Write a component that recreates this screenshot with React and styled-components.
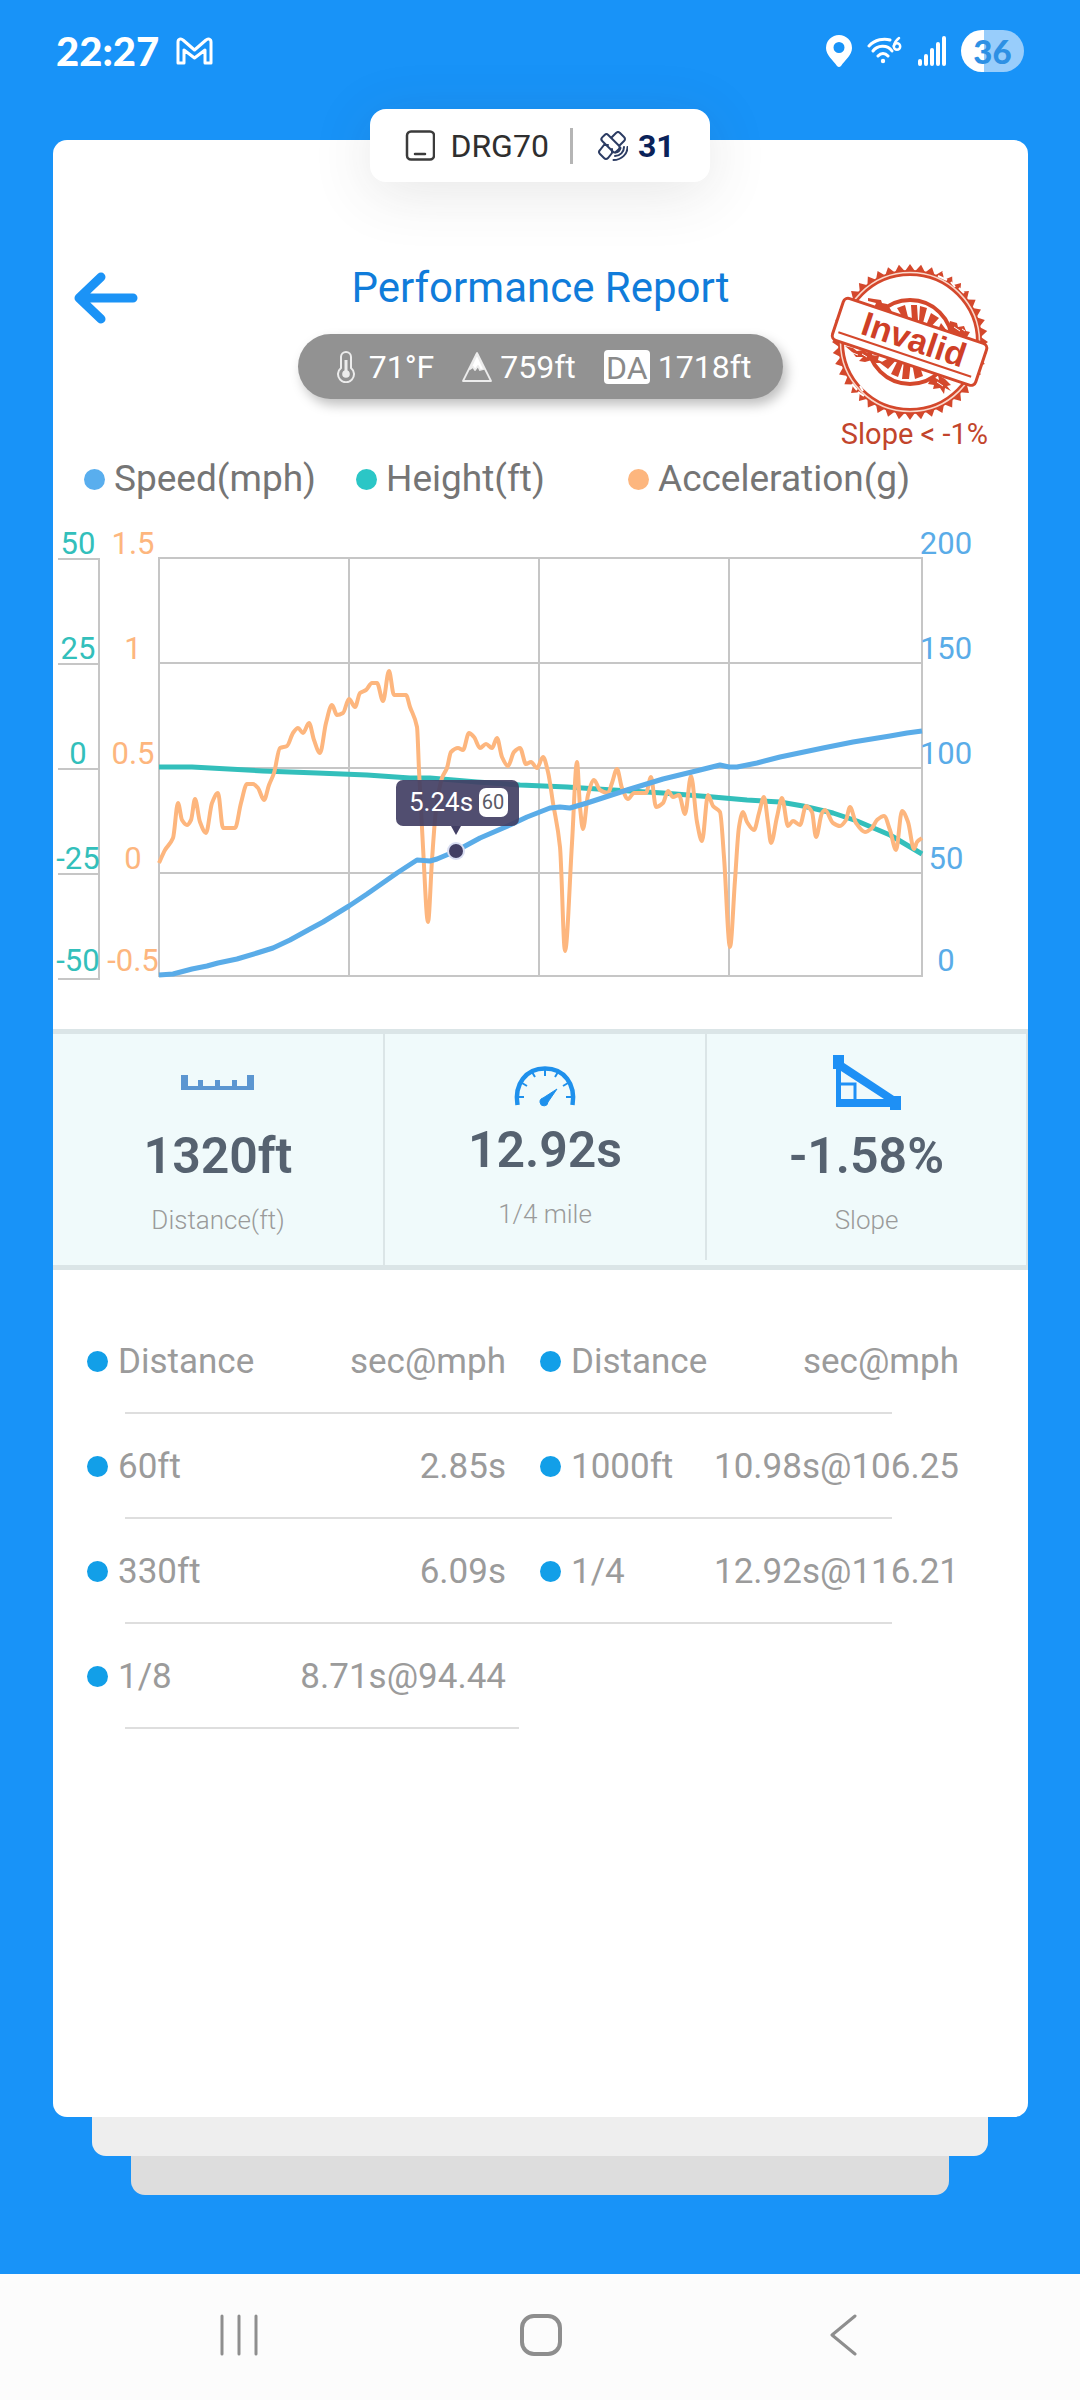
import React from "react";
import styled, { createGlobalStyle } from "styled-components";

const GlobalStyle = createGlobalStyle`
  * {
    box-sizing: border-box;
  }

  body {
    margin: 0;
    background-color: #1893f8;
    font-family: Roboto, "Liberation Sans", sans-serif;
  }

  svg {
    display: block;
  }

  button {
    padding: 0;
    border: none;
    background: none;
    cursor: pointer;
  }
`;

const Page = styled.div`
  display: flex;
  flex-direction: column;
  min-height: 100vh;
`;

const StatusBar = styled.header`
  display: flex;
  align-items: center;
  justify-content: space-between;
  height: 109px;
  padding: 0 56px 8px;
  color: #fff;
`;

const StatusGroup = styled.div`
  display: flex;
  align-items: center;
  gap: ${(props) => props.$gap}px;
`;

const Clock = styled.time`
  font-family: Lato, Roboto, sans-serif;
  font-size: 40px;
  font-weight: 900;
  line-height: 48px;
`;

const Battery = styled.div`
  width: 63px;
  height: 42px;
  border-radius: 21px;
  background: linear-gradient(to right, #fff 36%, #98cdfb 36%);
  color: #2d90e4;
  font-family: Lato, Roboto, sans-serif;
  font-size: 33px;
  font-weight: 900;
  line-height: 42px;
  text-align: center;
`;

const DevicePill = styled.div`
  display: flex;
  align-items: center;
  align-self: center;
  position: relative;
  z-index: 1;
  height: 73px;
  margin-bottom: -42px;
  padding: 0 35px;
  border-radius: 16px;
  background-color: #fff;
  box-shadow: 0 10px 60px rgba(60, 60, 60, 0.13);
`;

const DeviceName = styled.span`
  margin-left: 15px;
  padding-right: 21px;
  border-right: 3px solid #b5b5b5;
  color: #2f2f2f;
  font-size: 32px;
  line-height: 36px;
`;

const SatelliteCount = styled.span`
  margin-left: 10px;
  color: #0a2259;
  font-size: 32px;
  font-weight: 700;
  line-height: 36px;
`;

const SatelliteIcon = styled.svg`
  margin-left: 25px;
`;

const Card = styled.main`
  flex: 1;
  margin: 0 52px 0 53px;
  padding-top: 120px;
  border-radius: 14px;
  background-color: #fff;
`;

const CardHeader = styled.div`
  display: grid;
  grid-template-columns: 1fr auto 1fr;
  padding: 0 20px;
`;

const BackButton = styled.button`
  justify-self: start;
  align-self: start;
  margin-top: 12px;
`;

const HeaderCenter = styled.div`
  display: flex;
  flex-direction: column;
  align-items: center;
`;

const Title = styled.h1`
  margin: 0;
  color: #107cda;
  font-size: 42px;
  font-weight: 400;
  line-height: 56px;
`;

const WeatherPill = styled.div`
  display: flex;
  align-items: center;
  gap: 28px;
  height: 65px;
  margin-top: 18px;
  padding: 0 32px 0 38px;
  border-radius: 33px;
  background-color: #929292;
  box-shadow: 4px 6px 12px rgba(0, 0, 0, 0.25);
  color: #fff;
  font-size: 32px;
  line-height: 36px;
`;

const WeatherItem = styled.div`
  display: flex;
  align-items: center;
  gap: ${(props) => props.$gap}px;
`;

const DensityBadge = styled.abbr`
  width: 46px;
  height: 34px;
  border-radius: 4px;
  background-color: #fff;
  color: #8a8a8a;
  font-size: 32px;
  line-height: 36px;
  text-align: center;
`;

const StampBox = styled.div`
  justify-self: end;
  display: flex;
  flex-direction: column;
  align-items: flex-end;
  margin-right: 18px;
  padding-top: 4px;
`;

const StampReason = styled.span`
  margin-right: 2px;
  color: #c2452c;
  font-size: 29px;
  line-height: 28px;
`;

const Legend = styled.ul`
  display: grid;
  grid-template-columns: repeat(3, minmax(0, 1fr));
  margin: 11px 0;
  padding: 0 128px 0 31px;
  list-style: none;
`;

const LegendItem = styled.li`
  display: flex;
  align-items: center;
  gap: 9px;
  color: #757575;
  font-size: 37px;
  line-height: 40px;
  white-space: nowrap;
`;

const Dot = styled.span`
  flex-shrink: 0;
  width: 21px;
  height: 21px;
  border-radius: 50%;
  background-color: ${(props) => props.color};
`;

const Chart = styled.svg`
  width: 100%;
  height: auto;
`;

const AxisLabel = styled.text`
  fill: ${(props) => props.color};
  font-size: 31px;
  text-anchor: middle;
`;

const Stats = styled.section`
  display: grid;
  grid-template-columns: 332fr 322fr 319fr;
  border: solid #dbe5e7;
  border-width: 5px 2px 5px 0;
  background-color: #f0fafb;
`;

const Stat = styled.div`
  display: flex;
  flex-direction: column;
  align-items: center;
  height: ${(props) => (props.$short ? 226 : 231)}px;
  padding-top: 16px;
  border-right: ${(props) => (props.$last ? "none" : "2px solid #dbe5e7")};
`;

const StatValue = styled.strong`
  margin-top: 12px;
  color: #566270;
  font-size: 50px;
  font-weight: 600;
  line-height: 60px;
`;

const StatLabel = styled.span`
  margin-top: 16px;
  color: #9a9a9a;
  font-size: 26px;
  font-weight: 300;
  line-height: 36px;
`;

const SplitTable = styled.table`
  display: block;
  margin: 39px 52px 0 17px;
  color: #9b9b9b;
  font-size: 35px;
  line-height: 40px;

  thead,
  tbody {
    display: block;
  }
`;

const SplitRow = styled.tr`
  display: grid;
  grid-template-columns: 2fr 3fr 2fr 3fr;
  grid-template-rows: 103px 2px;
  align-items: center;

  &::after {
    content: "";
    grid-row: 2;
    grid-column: ${(props) => (props.$half ? "1 / 3" : "1 / -1")};
    height: 2px;
    margin: 0 ${(props) => (props.$half ? 4 : 84)}px 0 55px;
    background-color: #dedede;
  }

  th,
  td {
    display: flex;
    align-items: center;
    gap: 10px;
    padding: 2px 17px 0;
    font-weight: 400;
    white-space: nowrap;
  }

  th:nth-child(even),
  td:nth-child(even) {
    justify-content: flex-end;
    padding-left: 0;
  }

  th:nth-child(odd),
  td:nth-child(odd) {
    padding-right: 0;
  }
`;

const StackedCard = styled.div`
  height: 39px;
  margin: 0 ${(props) => props.$inset}px;
  border-radius: 0 0 14px 14px;
  background-color: ${(props) => props.color};
`;

const NavBar = styled.nav`
  display: grid;
  grid-template-columns: repeat(3, 1fr);
  place-items: center;
  height: 126px;
  margin-top: 79px;
  padding: 0 86px 4px 88px;
  background-color: #fcfcfc;
`;

const COLORS = {
  speed: "#5aace8",
  height: "#33bfbb",
  acceleration: "#fdb67e",
  grid: "#c6c6c6",
  tooltip: "#423f64",
};

const legend = [
  { label: "Speed(mph)", color: "#59aeee" },
  { label: "Height(ft)", color: "#2bc6c6" },
  { label: "Acceleration(g)", color: "#fdb67e" },
];

const heightAxis = ["50", "25", "0", "-25", "-50"];
const accelerationAxis = ["1.5", "1", "0.5", "0", "-0.5"];
const speedAxis = ["200", "150", "100", "50", "0"];
const labelY = [44, 149, 254, 359, 461];
const gridY = [0, 105, 210, 315, 418];
const gridX = [0, 190, 380, 570, 763];

// plot coordinates, 763 x 418
const speedPoints = [
  [0, 417], [14, 416], [33, 411], [48, 408], [59, 405], [78, 401], [98, 395],
  [114, 390], [131, 382], [151, 371], [164, 364], [190, 348], [208, 336],
  [238, 315], [258, 302], [271, 303], [278, 301], [297, 293], [321, 280],
  [351, 267], [368, 259], [391, 250], [401, 249], [411, 250], [428, 245],
  [468, 232], [504, 221], [541, 212], [561, 207], [570, 209], [578, 209],
  [598, 205], [621, 199], [664, 190], [694, 184], [731, 178], [748, 175],
  [763, 173],
];

const heightPoints = [
  [0, 209], [33, 209], [104, 213], [158, 215], [208, 217], [251, 220],
  [271, 220], [318, 224], [361, 227], [408, 229], [454, 232], [504, 235],
  [554, 239], [588, 242], [621, 244], [644, 248], [674, 255], [698, 263],
  [731, 277], [763, 296],
];

const accelerationPoints = [
  [0, 305], [6, 292], [14, 280], [19, 245], [23, 262], [28, 267], [32, 262],
  [36, 241], [41, 264], [47, 275], [53, 245], [59, 235], [64, 270], [70, 270],
  [76, 270], [82, 245], [88, 226], [94, 226], [99, 230], [105, 242],
  [110, 227], [115, 215], [121, 190], [128, 188], [134, 175], [139, 170],
  [144, 175], [150, 165], [155, 182], [161, 195], [167, 165], [173, 147],
  [178, 157], [184, 155], [190, 141], [196, 149], [201, 135], [207, 132],
  [213, 125], [218, 125], [224, 143], [230, 113], [235, 137], [247, 137],
  [251, 149], [258, 169], [260, 212], [264, 289], [269, 364], [273, 302],
  [277, 252], [283, 220], [288, 210], [292, 194], [299, 190], [304, 192],
  [310, 175], [315, 179], [321, 190], [327, 186], [333, 190], [338, 180],
  [343, 199], [349, 208], [355, 194], [361, 190], [367, 206], [372, 204],
  [378, 210], [384, 199], [389, 214], [394, 245], [401, 289], [406, 393],
  [413, 285], [418, 204], [421, 249], [424, 271], [429, 237], [435, 222],
  [441, 232], [449, 235], [453, 225], [458, 211], [463, 230], [469, 241],
  [475, 235], [487, 235], [492, 219], [497, 249], [504, 245], [509, 233],
  [514, 239], [520, 237], [526, 256], [532, 218], [538, 264], [543, 283],
  [549, 237], [554, 248], [561, 254], [565, 299], [571, 389], [576, 322],
  [580, 269], [584, 254], [588, 264], [595, 272], [600, 255], [605, 239],
  [609, 265], [612, 285], [618, 259], [623, 240], [629, 268], [634, 263],
  [641, 267], [647, 248], [653, 254], [657, 279], [663, 255], [666, 252],
  [674, 265], [681, 268], [687, 262], [691, 249], [697, 265], [706, 274],
  [713, 270], [718, 262], [725, 258], [731, 272], [737, 292], [743, 253],
  [749, 264], [755, 291], [758, 284], [763, 280],
];

const splits = [
  ["60ft", "2.85s", "1000ft", "10.98s@106.25"],
  ["330ft", "6.09s", "1/4", "12.92s@116.21"],
  ["1/8", "8.71s@94.44"],
];

const slopeBetween = (a, b) => (b[1] - a[1]) / (b[0] - a[0]);

// slope at a point, flat on every local peak so the curve never overshoots
const tangent = (points, i) => {
  const prev = points[i - 1];
  const point = points[i];
  const next = points[i + 1];
  if (!prev) return slopeBetween(point, next);
  if (!next) return slopeBetween(prev, point);
  const before = slopeBetween(prev, point);
  const after = slopeBetween(point, next);
  if (before * after <= 0) return 0;
  return (2 * before * after) / (before + after);
};

const smoothPath = (points) =>
  points
    .map(([x, y], i) => {
      if (i === 0) return `M${x} ${y}`;
      const [px, py] = points[i - 1];
      const dx = (x - px) / 3;
      const y1 = py + dx * tangent(points, i - 1);
      const y2 = y - dx * tangent(points, i);
      return `C${px + dx} ${y1} ${x - dx} ${y2} ${x} ${y}`;
    })
    .join("");

const linePath = (points) => "M" + points.map((point) => point.join(" ")).join("L");

const teethPath = () => {
  const count = 44;
  let d = "";
  for (let i = 0; i < count * 2; i++) {
    const angle = (Math.PI * i) / count;
    const radius = i % 2 ? 71 : 78;
    d += `${i ? "L" : "M"}${radius * Math.cos(angle)} ${radius * Math.sin(angle)}`;
  }
  return d + "Z";
};

const InvalidStamp = () => (
  <svg width="160" height="156" viewBox="-80 -78 160 156" role="img" aria-label="Invalid">
    <path d={teethPath()} fill="#d4482c" />
    <circle r="69" fill="#fff" stroke="#d4482c" strokeWidth="6" />
    <circle r="69.500" fill="none" stroke="#fbd9cc" strokeWidth="1.500" />
    <circle r="42" fill="none" stroke="#d4482c" strokeWidth="4" />
    <g fill="#d4482c">
      <path d="M-13 -34l8 -3 3 12 -5 1zM1 -37h6l1 16 -6 -1zM10 -36l7 2 -4 15 -4 -2zM21 -29l8 5 -11 12 -3 -2zM31 -19l6 8 -12 5z" />
      <path d="M13 34l-8 3 -3 -16 6 -2zM-1 37h-7l2 -19 7 1zM-12 35l-7 -3 8 -16 5 2zM-22 27l-8 -6 14 -8 4 3z" />
      <path d="M-42 -44l6 1 7 1 1 3 5 1 4 6 3 6 -4 3 -8 -5 -3 -7 -5 1 2 -5 -8 -2z" />
      <path d="M40 -21l7 2 1 4 6 -1 2 5 4 1 -3 5 3 3 -8 -1 -5 2 -6 -4 1 -5 -4 -4z" />
      <path d="M-65 4l8 2 4 3 6 -1 8 5 8 1 -1 4 7 3 -9 0 -4 -3 -7 2 -6 -1 4 -4 -7 0 -4 -5z" />
      <path d="M22 34l7 4 -1 -5 7 4 6 6 -4 1 4 5 -6 -3 -1 6 -4 -6 -7 1 1 -4 -6 -1z" />
    </g>
    <g stroke="#fff" strokeWidth="2" fill="none">
      <path d="M28 -66l9 4M33 -70l5 5M41 -60l4 5M49 -54l5 5M-58 42l5 6M-52 50l6 4M-50 44l3 5" />
      <path d="M-60 10l8 3M-48 12l5 3M44 -15l6 4M52 -13l3 2M27 40l6 4" strokeWidth="1" />
    </g>
    <g transform="rotate(18.5)">
      <rect x="-76" y="-22" width="151" height="44" rx="5" fill="#fff" stroke="#d4482c" strokeWidth="3" />
      <path d="M-71 13.5H69" stroke="#d4482c" strokeWidth="2" />
      <text
        x="3"
        y="8"
        fill="#cf3f27"
        fontFamily="Liberation Sans, sans-serif"
        fontSize="34"
        fontWeight="700"
        textAnchor="middle"
      >
        Invalid
      </text>
    </g>
  </svg>
);

const RunChart = () => (
  <Chart viewBox="0 0 975 519" role="img" aria-label="Speed, height and acceleration over the run">
    <g stroke={COLORS.grid} strokeWidth="2" fill="none">
      <path d="M46 48V470" />
      {[49, 154, 259, 364, 469].map((y) => (
        <path key={y} d={`M5 ${y}H46`} />
      ))}
      <g transform="translate(106 48)">
        {gridY.map((y) => (
          <path key={y} d={`M0 ${y}H763`} />
        ))}
        {gridX.map((x) => (
          <path key={x} d={`M${x} -1V419`} />
        ))}
      </g>
    </g>

    {labelY.map((y, i) => (
      <g key={y}>
        <AxisLabel x="25" y={y} color={COLORS.height}>{heightAxis[i]}</AxisLabel>
        <AxisLabel x="80" y={y} color={COLORS.acceleration}>{accelerationAxis[i]}</AxisLabel>
        <AxisLabel x="893" y={y} color={COLORS.speed}>{speedAxis[i]}</AxisLabel>
      </g>
    ))}

    <g transform="translate(106 48)" fill="none" strokeLinejoin="round">
      <path d={linePath(heightPoints)} stroke={COLORS.height} strokeWidth="5" />
      <path d={smoothPath(accelerationPoints)} stroke={COLORS.acceleration} strokeWidth="4" />
      <path d={linePath(speedPoints)} stroke={COLORS.speed} strokeWidth="5" />
    </g>

    <circle cx="403" cy="341" r="9" fill="#d9def2" />
    <circle cx="403" cy="341" r="7" fill={COLORS.tooltip} />
    <rect x="343" y="270" width="123" height="46" rx="7" fill={COLORS.tooltip} fillOpacity="0.92" />
    <path d="M398 316h10l-5 9z" fill={COLORS.tooltip} />
    <text x="356" y="301" fill="#fff" fontSize="26">5.24s</text>
    <rect x="426" y="278" width="29" height="29" rx="7" fill="#fff" />
    <text x="440" y="299" fill="#5a5a66" fontSize="20" textAnchor="middle">60</text>
  </Chart>
);

const RulerIcon = () => (
  <svg width="80" height="64" viewBox="0 0 80 64" fill="#5c96d1">
    <path d="M3 25h7v11h10v-6h5v6h12v-6h5v6h12v-6h5v6h10v-11h7v15H3z" />
  </svg>
);

const GaugeIcon = () => (
  <svg width="80" height="58" viewBox="0 0 80 58" fill="none" stroke="#1e90ec">
    <path d="M12.500 55C9 34 21 18.500 40 18.500S71 34 67.500 55" strokeWidth="4.500" />
    <path d="M14 47h5M17 33l5 3M27 22l3 5M40 19v7M53 22l-3 5M63 33l-5 3M66 47h-5" strokeWidth="2" />
    <path d="M52 39l-9 13a4 4 0 1 1-5-4z" fill="#1e90ec" strokeWidth="1" />
  </svg>
);

const SlopeIcon = () => (
  <svg width="80" height="64" viewBox="0 0 80 64" fill="#1e90f5">
    <path d="M6 5h11v8l50 33h7v14H63v-3H9V19H6zM14 21v28h43z" />
    <path d="M14 34h14v16" fill="none" stroke="#1e90f5" strokeWidth="3" />
  </svg>
);

const stats = [
  { icon: <RulerIcon />, value: "1320ft", label: "Distance(ft)" },
  { icon: <GaugeIcon />, value: "12.92s", label: "1/4 mile", short: true },
  { icon: <SlopeIcon />, value: "-1.58%", label: "Slope", last: true },
];

const App = () => {
  return (
    <Page>
      <GlobalStyle />
      <StatusBar>
        <StatusGroup $gap={17}>
          <Clock>22:27</Clock>
          <svg width="37" height="28" viewBox="0 0 37 28" fill="none" stroke="#fff" strokeWidth="3" strokeLinejoin="round">
            <path d="M2 26V5c0-3 3-4 5-2l11.500 10L30 3c2-2 5-1 5 2v21h-6V13L18.500 21 8 13v13z" />
          </svg>
        </StatusGroup>
        <StatusGroup $gap={15}>
          <svg width="26" height="32" viewBox="0 0 26 32" fill="#fff">
            <path fillRule="evenodd" d="M13 0a13 13 0 0 0-13 13c0 7 7 12 11 18q2 2 4 0c4-6 11-11 11-18A13 13 0 0 0 13 0zm0 7a5.500 5.500 0 1 1 0 11 5.500 5.500 0 0 1 0-11z" />
          </svg>
          <svg width="36" height="30" viewBox="0 0 36 30" fill="none" stroke="#fff" strokeWidth="3" strokeLinecap="round">
            <path d="M2 10C8 3.500 17 2 23 4M6 15C10 9.500 20 8 25 15M11 20c3-3.500 7-3.500 10 0" />
            <circle cx="16" cy="25" r="2.200" fill="#fff" stroke="none" />
            <circle cx="30" cy="10.500" r="3.200" strokeWidth="2.500" />
            <path d="M32 2q-4 3-5.200 8" strokeWidth="2.500" />
          </svg>
          <svg width="28" height="30" viewBox="0 0 28 30" stroke="#fff" strokeWidth="4" strokeLinecap="round">
            <path d="M2 25v3M8 20v8M14 14v14M20 8v20M26 2v26" />
          </svg>
          <Battery>36</Battery>
        </StatusGroup>
      </StatusBar>

      <DevicePill>
        <svg width="30" height="31" viewBox="0 0 30 31" fill="none" stroke="#3b3b3b" strokeWidth="2.500">
          <rect x="2" y="1.500" width="27" height="28" rx="4" />
          <path d="M10 24h10" strokeLinecap="round" />
        </svg>
        <DeviceName>DRG70</DeviceName>
        <SatelliteIcon width="30" height="30" viewBox="0 0 30 30" fill="none" stroke="#2c3c63" strokeWidth="2" strokeLinecap="round">
          <rect x="2.500" y="8" width="20" height="8.500" rx="2.500" transform="rotate(45 12.500 12.250)" />
          <path d="M14 6l4-4q2-2 4 0l4 4q2 2 0 4l-4 4M10 14l-4 0-4 5q-2 2 0 4l4 4q2 2 4 0l4-5v-4" />
          <path d="M26 16c0 5-4 9-9 9M29.500 16c0 7-6 13-14 13M22.500 17q-1 4-5 4.500" />
        </SatelliteIcon>
        <SatelliteCount>31</SatelliteCount>
      </DevicePill>

      <Card>
        <CardHeader>
          <BackButton type="button" aria-label="Back">
            <svg width="66" height="52" viewBox="0 0 66 52" fill="none" stroke="#1b93f6" strokeWidth="9" strokeLinecap="round" strokeLinejoin="round">
              <path d="M28 5L6 26l22 21M8 26h52" />
            </svg>
          </BackButton>
          <HeaderCenter>
            <Title>Performance Report</Title>
            <WeatherPill>
              <WeatherItem $gap={13}>
                <svg width="20" height="32" viewBox="0 0 20 32" fill="none" stroke="#ececec" strokeWidth="2">
                  <path d="M5 17V6a5 5 0 0 1 10 0v11a8 8 0 1 1-10 0z" />
                  <path d="M10 9v13" strokeWidth="3" />
                  <circle cx="10" cy="23" r="2.800" fill="#ececec" />
                </svg>
                <span>71°F</span>
              </WeatherItem>
              <WeatherItem $gap={8}>
                <svg width="30" height="32" viewBox="0 0 30 32" fill="none" stroke="#ececec" strokeWidth="1.800" strokeLinejoin="round">
                  <path d="M15 2L1 30h28z" />
                  <path d="M15 3L8 18l3-2 2 3 3-4 2 4 4-1z" fill="#fff" />
                </svg>
                <span>759ft</span>
              </WeatherItem>
              <WeatherItem $gap={8}>
                <DensityBadge>DA</DensityBadge>
                <span>1718ft</span>
              </WeatherItem>
            </WeatherPill>
          </HeaderCenter>
          <StampBox>
            <InvalidStamp />
            <StampReason>Slope &lt; -1%</StampReason>
          </StampBox>
        </CardHeader>

        <Legend>
          {legend.map((item) => (
            <LegendItem key={item.label}>
              <Dot color={item.color} />
              {item.label}
            </LegendItem>
          ))}
        </Legend>

        <RunChart />

        <Stats>
          {stats.map((stat) => (
            <Stat key={stat.label} $short={stat.short} $last={stat.last}>
              {stat.icon}
              <StatValue>{stat.value}</StatValue>
              <StatLabel>{stat.label}</StatLabel>
            </Stat>
          ))}
        </Stats>

        <SplitTable>
          <thead>
            <SplitRow>
              {["Distance", "sec@mph", "Distance", "sec@mph"].map((head, key) => (
                <th key={key} scope="col">
                  {key % 2 === 0 && <Dot color="#129fe8" />}
                  {head}
                </th>
              ))}
            </SplitRow>
          </thead>
          <tbody>
            {splits.map((row) => (
              <SplitRow key={row[0]} $half={row.length === 2}>
                {row.map((cell, key) => (
                  <td key={key}>
                    {key % 2 === 0 && <Dot color="#129fe8" />}
                    {cell}
                  </td>
                ))}
              </SplitRow>
            ))}
          </tbody>
        </SplitTable>
      </Card>
      <StackedCard $inset={92} color="#eeeeee" />
      <StackedCard $inset={131} color="#dddddd" />

      <NavBar>
        <button type="button" aria-label="Recent apps">
          <svg width="40" height="42" viewBox="0 0 40 42" stroke="#8e8e8e" strokeWidth="3" strokeLinecap="round">
            <path d="M3 2v38M20 2v38M37 2v38" />
          </svg>
        </button>
        <button type="button" aria-label="Home">
          <svg width="42" height="42" viewBox="0 0 42 42" fill="none" stroke="#8e8e8e" strokeWidth="4">
            <rect x="2" y="2" width="38" height="38" rx="12" />
          </svg>
        </button>
        <button type="button" aria-label="Go back">
          <svg width="28" height="42" viewBox="0 0 28 42" fill="none" stroke="#8e8e8e" strokeWidth="3" strokeLinecap="round" strokeLinejoin="round">
            <path d="M26 2L3 21l23 19" />
          </svg>
        </button>
      </NavBar>
    </Page>
  );
};

export default App;
